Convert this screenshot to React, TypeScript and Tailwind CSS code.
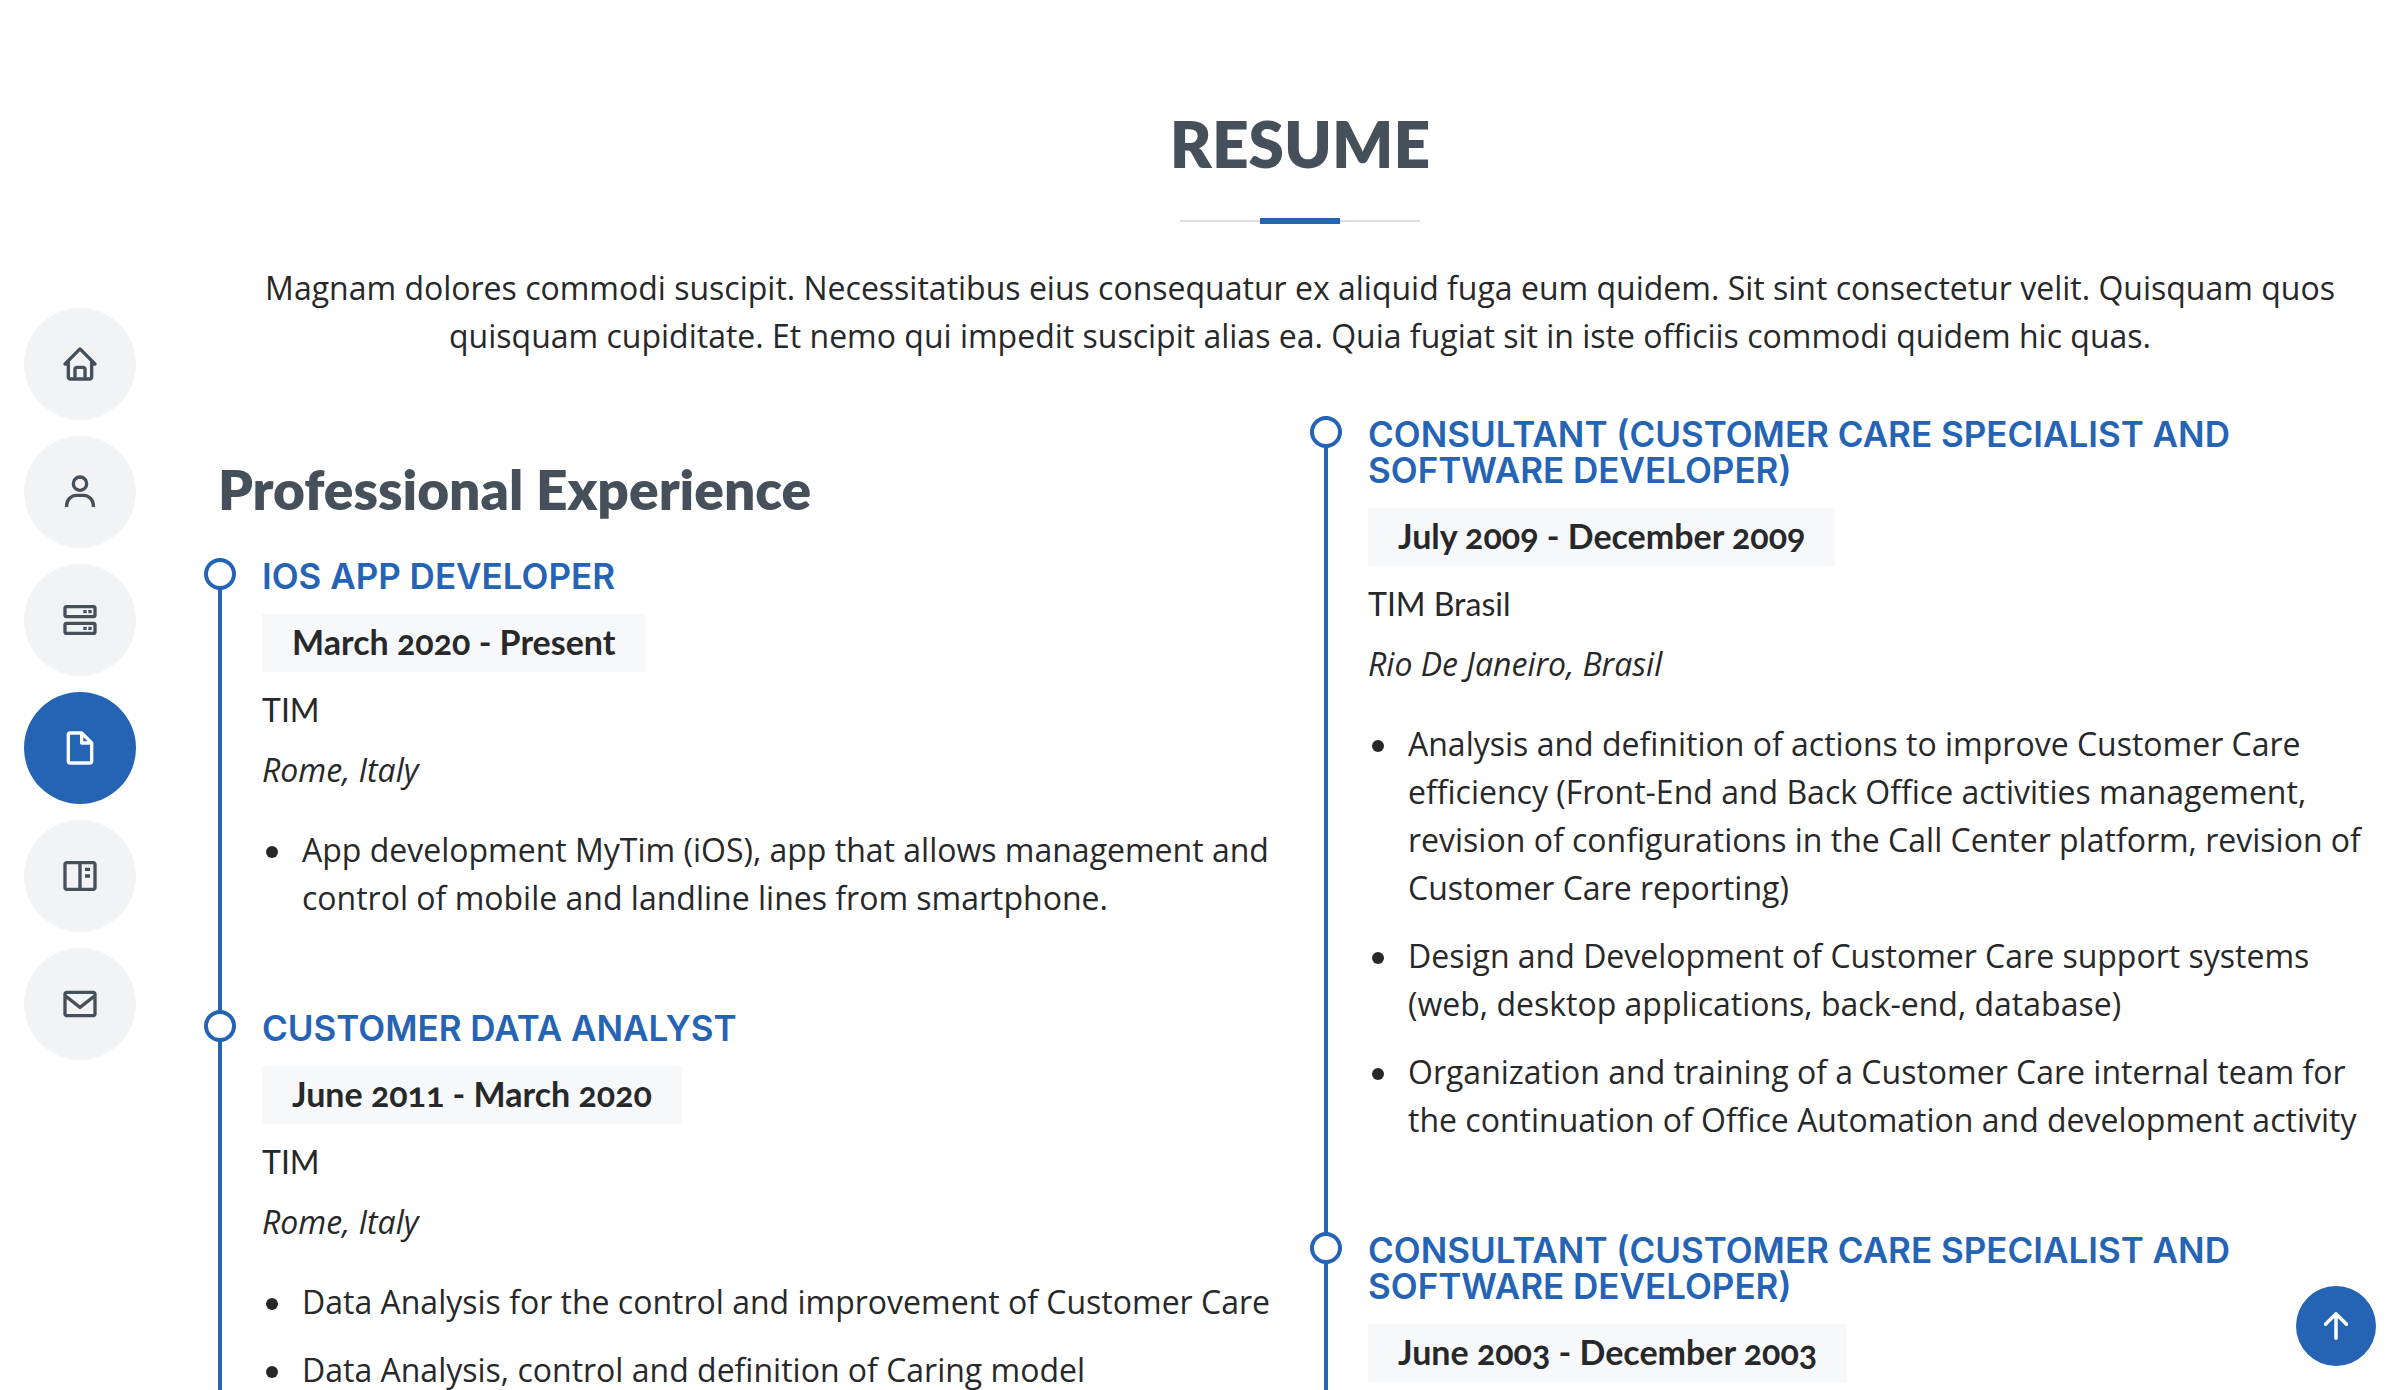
import { BiHome, BiUser, BiServer, BiFileBlank, BiBookContent, BiEnvelope } from "react-icons/bi";
import { BsArrowUpShort } from "react-icons/bs";

type Job = {
  title: string;
  period: string;
  company?: string;
  place?: string;
  duties?: string[];
};

const links = [
  { label: "Home", href: "#hero", Icon: BiHome },
  { label: "About", href: "#about", Icon: BiUser },
  { label: "Services", href: "#services", Icon: BiServer },
  { label: "Resume", href: "#resume", Icon: BiFileBlank, active: true },
  { label: "Portfolio", href: "#portfolio", Icon: BiBookContent },
  { label: "Contact", href: "#contact", Icon: BiEnvelope },
];

const leftJobs: Job[] = [
  {
    title: "iOS App Developer",
    period: "March 2020 - Present",
    company: "TIM",
    place: "Rome, Italy",
    duties: [
      "App development MyTim (iOS), app that allows management and control of mobile and landline lines from smartphone.",
    ],
  },
  {
    title: "Customer Data Analyst",
    period: "June 2011 - March 2020",
    company: "TIM",
    place: "Rome, Italy",
    duties: [
      "Data Analysis for the control and improvement of Customer Care",
      "Data Analysis, control and definition of Caring model",
    ],
  },
];

const rightJobs: Job[] = [
  {
    title: "Consultant (Customer Care Specialist and Software Developer)",
    period: "July 2009 - December 2009",
    company: "TIM Brasil",
    place: "Rio De Janeiro, Brasil",
    duties: [
      "Analysis and definition of actions to improve Customer Care efficiency (Front-End and Back Office activities management, revision of configurations in the Call Center platform, revision of Customer Care reporting)",
      "Design and Development of Customer Care support systems (web, desktop applications, back-end, database)",
      "Organization and training of a Customer Care internal team for the continuation of Office Automation and development activity",
    ],
  },
  {
    title: "Consultant (Customer Care Specialist and Software Developer)",
    period: "June 2003 - December 2003",
  },
];

function JobItem({ job }: { job: Job }) {
  return (
    <article className="relative -mt-1 border-l-4 border-[#2563b5] pb-10 pl-10 first:mt-0">
      <span className="absolute top-0 -left-[18px] size-8 rounded-full border-4 border-[#2563b5] bg-white" />
      <h4 className="mb-5 font-['Inter',sans-serif] text-[35px] leading-9 font-semibold text-[#2563b5] uppercase">
        {job.title}
      </h4>
      <h5 className="w-fit bg-[#f7f8fa] px-[30px] pt-[9px] pb-[11px] font-['Lato',sans-serif] text-[34px] leading-[38px] font-bold oldstyle-nums">
        {job.period}
      </h5>
      {job.company && <p className="mt-3.5 font-['Lato',sans-serif] leading-[48px]">{job.company}</p>}
      {job.place && <p className="mt-3 italic">{job.place}</p>}
      {job.duties && (
        <ul className="my-8 pl-1">
          {job.duties.map((duty) => (
            <li key={duty} className="flex gap-6 pb-5">
              <span className="mt-5 size-3 shrink-0 rounded-full bg-[#272829]" />
              <span>{duty}</span>
            </li>
          ))}
        </ul>
      )}
    </article>
  );
}

export default function App() {
  return (
    <div className="flex h-screen overflow-hidden bg-white font-['Open_Sans',sans-serif] text-[32px] leading-[48px] text-[#272829]">
      <nav aria-label="Sections" className="flex w-[200px] shrink-0 flex-col justify-center gap-4 pb-[22px] pl-6">
        {links.map(({ label, href, Icon, active }) => (
          <a
            key={label}
            href={href}
            aria-label={label}
            className={
              active
                ? "flex size-28 items-center justify-center rounded-full bg-[#2563b5] text-white"
                : "flex size-28 items-center justify-center rounded-full bg-[#f2f3f5] text-[#45505b]"
            }
          >
            <Icon className="size-10" />
          </a>
        ))}
      </nav>

      <main id="resume" className="min-w-0 flex-1 px-[18px] pt-[106px]">
        <header className="pb-14 text-center">
          <h2 className="font-['Lato',sans-serif] text-[64px] leading-[76px] font-extrabold text-[#45505b] uppercase">
            Resume
          </h2>
          <div className="mx-auto mt-9 flex h-1.5 w-60 items-center">
            <span className="h-0.5 flex-1 bg-[#dddddd]" />
            <span className="h-1.5 w-20 bg-[#2563b5]" />
            <span className="h-0.5 flex-1 bg-[#dddddd]" />
          </div>
          <p className="mt-10 px-10">
            Magnam dolores commodi suscipit. Necessitatibus eius consequatur ex aliquid fuga eum quidem. Sit sint
            consectetur velit. Quisquam quos quisquam cupiditate. Et nemo qui impedit suscipit alias ea. Quia fugiat
            sit in iste officiis commodi quidem hic quas.
          </p>
        </header>

        <div className="grid grid-cols-2 gap-12">
          <section>
            <h3 className="mt-10 mb-9 font-['Lato',sans-serif] text-[55px] leading-[66px] font-extrabold text-[#45505b]">
              Professional Experience
            </h3>
            <div>
              {leftJobs.map((job) => (
                <JobItem key={job.period} job={job} />
              ))}
            </div>
          </section>
          <section>
            {rightJobs.map((job) => (
              <JobItem key={job.period} job={job} />
            ))}
          </section>
        </div>
      </main>

      <a
        href="#hero"
        aria-label="Back to top"
        className="fixed right-6 bottom-6 flex size-20 items-center justify-center rounded-full bg-[#2563b5] text-white"
      >
        <BsArrowUpShort className="size-14" />
      </a>
    </div>
  );
}
